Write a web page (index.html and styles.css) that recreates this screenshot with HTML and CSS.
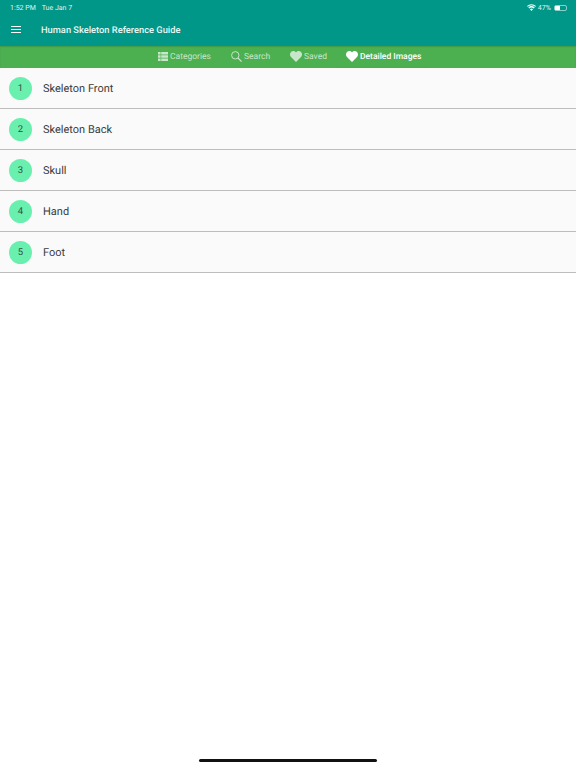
FILE: index.html
```
<!DOCTYPE html>
<html lang="en">
<head>
<meta charset="utf-8">
<title>Human Skeleton Reference Guide</title>
<link rel="stylesheet" href="styles.css">
</head>
<body>
<div class="screen">
  <header class="appbar">
    <div class="status">
      <span class="time">1:52 PM</span>
      <span class="date">Tue Jan 7</span>
      <span class="status-right">
        <svg class="wifi" width="9" height="7" viewBox="0 0 18 14"><path d="M9 14 6 10.6a4.4 4.4 0 0 1 6 0ZM4.5 9 2.6 7a9.4 9.4 0 0 1 12.8 0l-1.9 2a6.6 6.6 0 0 0-9 0ZM1.4 5.7 0 4.2a13 13 0 0 1 18 0l-1.4 1.5a11 11 0 0 0-15.2 0Z" fill="#fff"/></svg>
        <span class="pct">47%</span>
        <span class="battery"><span class="battery-fill"></span></span>
      </span>
    </div>
    <div class="titlebar">
      <svg class="menu" width="10" height="7" viewBox="0 0 10 7"><path d="M0 .5h10M0 3.500h10M0 6.500h10" stroke="#fff" stroke-width="1"/></svg>
      <span class="title">Human Skeleton Reference Guide</span>
    </div>
  </header>
  <nav class="tabs">
    <div class="tab t1">
      <svg width="10" height="9" viewBox="0 0 10 9"><path fill="currentColor" d="M0 0h2.600v2.500H0zM3.200 0H10v2.500H3.200zM0 3.200h2.600v2.500H0zM3.200 3.200H10v2.500H3.200zM0 6.400h2.600V9H0zM3.200 6.400H10V9H3.200z"/></svg>
      <span>Categories</span>
    </div>
    <div class="tab t2">
      <svg width="11" height="11" viewBox="0 0 11 11"><circle cx="4.300" cy="4.300" r="3.700" fill="none" stroke="currentColor" stroke-width="1"/><path d="M7 7l3.600 3.600" stroke="currentColor" stroke-width="1.200"/></svg>
      <span>Search</span>
    </div>
    <div class="tab t3">
      <svg width="12" height="11" viewBox="0 0 12 11"><path fill="currentColor" d="M6 11 1 6C-.4 4.500-.3 2.300 1 1c1.400-1.300 3.600-1.300 5 .6C7.400-.3 9.600-.3 11 1c1.300 1.300 1.400 3.500 0 5Z"/></svg>
      <span>Saved</span>
    </div>
    <div class="tab active">
      <svg width="12" height="11" viewBox="0 0 12 11"><path fill="currentColor" d="M6 11 1 6C-.4 4.500-.3 2.300 1 1c1.400-1.300 3.600-1.300 5 .6C7.400-.3 9.600-.3 11 1c1.300 1.300 1.400 3.500 0 5Z"/></svg>
      <span>Detailed Images</span>
    </div>
  </nav>
  <ul class="list">
    <li class="row"><span class="num">1</span><span class="label">Skeleton Front</span></li>
    <li class="row"><span class="num">2</span><span class="label">Skeleton Back</span></li>
    <li class="row"><span class="num">3</span><span class="label">Skull</span></li>
    <li class="row"><span class="num">4</span><span class="label">Hand</span></li>
    <li class="row"><span class="num">5</span><span class="label">Foot</span></li>
  </ul>
  <div class="home-wrap"><div class="home"></div></div>
</div>
</body>
</html>
```
FILE: styles.css
```
* { box-sizing: border-box; }
html, body { margin: 0; padding: 0; }
body { background: #fff; font-family: Roboto, "Liberation Sans", sans-serif; text-rendering: geometricPrecision; -webkit-font-smoothing: antialiased; }
.screen { width: 576px; height: 768px; display: flex; flex-direction: column; overflow: hidden; }
.appbar { height: 46px; background: #009688; color: #fff; flex: none; }
.status { height: 15px; display: flex; align-items: center; padding: 0 9px 0 10px; font-size: 7px; color: #e0f2f0; }
.date { margin-left: 6px; }
.status-right { margin-left: auto; display: flex; align-items: center; gap: 2px; }
.pct { letter-spacing: .1px; }
.battery { width: 13px; height: 6px; border: 1px solid rgba(255,255,255,.55); border-radius: 2px; display: block; padding: 0; margin-left: 1px; }
.battery-fill { display: block; width: 5px; height: 4px; background: #fff; }
.titlebar { height: 31px; display: flex; align-items: center; padding-left: 11px; padding-bottom: 2px; }
.menu { flex: none; }
.title { margin-left: 20px; font-size: 9.300px; font-weight: 500; color: #e8f6f4; line-height: 13px; padding-top: 1px; }
.tabs { height: 22px; flex: none; background: #4caf50; display: flex; padding-left: 158px; align-items: stretch; box-shadow: inset 0 1px 1px rgba(0,0,0,.12); }
.tab { display: flex; align-items: center; gap: 2px; font-size: 8.500px; color: #c8e6c9; padding-bottom: 1px; }
.t1 { width: 73px; }
.t2 { width: 59px; }
.t3 { width: 46px; }
.tab.active { color: #fff; font-weight: 500; border-bottom: 1px solid #6f8f80; padding: 0 9px 0 10px; }
.list { list-style: none; margin: 0; padding: 0; }
.row { height: 41px; background: #fafafa; border-bottom: 1px solid #bdbdbd; display: flex; align-items: center; padding-left: 9px; }
.num { width: 23px; height: 23px; border-radius: 50%; background: #69f0ae; color: #3a4a42; display: flex; align-items: center; justify-content: center; font-size: 9.500px; flex: none; }
.label { margin-left: 11px; font-size: 11px; color: #3c3c3c; }
.home-wrap { margin-top: auto; height: 14px; display: flex; justify-content: center; flex: none; }
.home { width: 178px; height: 3px; border-radius: 2px; background: #111; margin-top: 5px; }
```
